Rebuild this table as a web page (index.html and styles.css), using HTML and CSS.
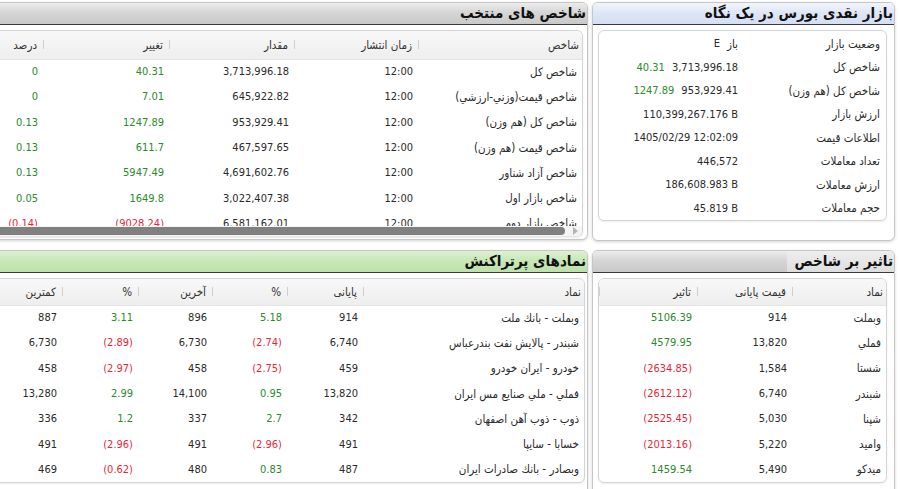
FILE: index.html
```html
<!DOCTYPE html>
<html lang="fa" dir="rtl">
<head>
<meta charset="utf-8">
<title>بازار</title>
<link rel="stylesheet" href="styles.css">
</head>
<body>
<div class="page">

  <section class="panel market">
    <h2 class="head blue"><span class="title">بازار نقدی بورس در یک نگاه</span></h2>
    <div class="box kv">
      <div class="kv-row"><span class="k">وضعیت بازار</span><span class="v"><span class="ar">باز</span><span class="ltr">E</span></span></div>
      <div class="kv-row"><span class="k">شاخص کل</span><span class="v"><span class="ltr">3,713,996.18</span><span class="ltr up">40.31</span></span></div>
      <div class="kv-row"><span class="k">شاخص کل (هم وزن)</span><span class="v"><span class="ltr">953,929.41</span><span class="ltr up">1247.89</span></span></div>
      <div class="kv-row"><span class="k">ارزش بازار</span><span class="v"><span class="ltr">110,399,267.176 B</span></span></div>
      <div class="kv-row"><span class="k">اطلاعات قیمت</span><span class="v"><span class="ltr">1405/02/29 12:02:09</span></span></div>
      <div class="kv-row"><span class="k">تعداد معاملات</span><span class="v"><span class="ltr">446,572</span></span></div>
      <div class="kv-row"><span class="k">ارزش معاملات</span><span class="v"><span class="ltr">186,608.983 B</span></span></div>
      <div class="kv-row"><span class="k">حجم معاملات</span><span class="v"><span class="ltr">45.819 B</span></span></div>
    </div>
  </section>

  <section class="panel selected">
    <h2 class="head gray"><span class="title">شاخص های منتخب</span></h2>
    <div class="box">
      <div class="clip">
        <table class="tbl">
          <colgroup><col class="c163"><col class="c124"><col class="c125"><col class="c126"><col></colgroup>
          <thead><tr><th class="first">شاخص</th><th>زمان انتشار</th><th>مقدار</th><th>تغییر</th><th>درصد</th></tr></thead>
          <tbody>
            <tr><td class="first">شاخص کل</td><td class="n">12:00</td><td class="n">3,713,996.18</td><td class="n up">40.31</td><td class="n up">0</td></tr>
            <tr><td class="first">شاخص قيمت(وزني-ارزشي)</td><td class="n">12:00</td><td class="n">645,922.82</td><td class="n up">7.01</td><td class="n up">0</td></tr>
            <tr><td class="first">شاخص کل (هم وزن)</td><td class="n">12:00</td><td class="n">953,929.41</td><td class="n up">1247.89</td><td class="n up">0.13</td></tr>
            <tr><td class="first">شاخص قیمت (هم وزن)</td><td class="n">12:00</td><td class="n">467,597.65</td><td class="n up">611.7</td><td class="n up">0.13</td></tr>
            <tr><td class="first">شاخص آزاد شناور</td><td class="n">12:00</td><td class="n">4,691,602.76</td><td class="n up">5947.49</td><td class="n up">0.13</td></tr>
            <tr><td class="first">شاخص بازار اول</td><td class="n">12:00</td><td class="n">3,022,407.38</td><td class="n up">1649.8</td><td class="n up">0.05</td></tr>
            <tr><td class="first">شاخص بازار دوم</td><td class="n">12:00</td><td class="n">6,581,162.01</td><td class="n down">(9028.24)</td><td class="n down">(0.14)</td></tr>
          </tbody>
        </table>
      </div>
      <div class="hscroll"><span class="arrow"></span><span class="thumb"></span></div>
    </div>
  </section>

  <section class="panel impact">
    <h2 class="head gray"><span class="title light">تاثیر بر شاخص</span></h2>
    <div class="box">
      <table class="tbl">
        <colgroup><col class="c93"><col class="c95"><col class="c98"><col></colgroup>
        <thead><tr><th class="first">نماد</th><th>قیمت پایانی</th><th>تاثیر</th><th></th></tr></thead>
        <tbody>
          <tr><td class="first">وبملت</td><td class="n">914</td><td class="n up">5106.39</td><td></td></tr>
          <tr><td class="first">فملي</td><td class="n">13,820</td><td class="n up">4579.95</td><td></td></tr>
          <tr><td class="first">شستا</td><td class="n">1,584</td><td class="n down">(2634.85)</td><td></td></tr>
          <tr><td class="first">شبندر</td><td class="n">6,740</td><td class="n down">(2612.12)</td><td></td></tr>
          <tr><td class="first">شپنا</td><td class="n">5,030</td><td class="n down">(2525.45)</td><td></td></tr>
          <tr><td class="first">واميد</td><td class="n">5,220</td><td class="n down">(2013.16)</td><td></td></tr>
          <tr><td class="first">ميدكو</td><td class="n">5,490</td><td class="n up">1459.54</td><td></td></tr>
        </tbody>
      </table>
    </div>
  </section>

  <section class="panel active">
    <h2 class="head green"><span class="title">نمادهای پرتراکنش</span></h2>
    <div class="box">
      <table class="tbl">
        <colgroup><col class="c220"><col class="c76"><col class="c75"><col class="c74"><col class="c76"><col></colgroup>
        <thead><tr><th class="first">نماد</th><th>پایانی</th><th>%</th><th>آخرین</th><th>%</th><th>کمترین</th></tr></thead>
        <tbody>
          <tr><td class="first">وبملت - بانك ملت</td><td class="n">914</td><td class="n up">5.18</td><td class="n">896</td><td class="n up">3.11</td><td class="n">887</td></tr>
          <tr><td class="first">شبندر - پالايش نفت بندرعباس</td><td class="n">6,740</td><td class="n down">(2.74)</td><td class="n">6,730</td><td class="n down">(2.89)</td><td class="n">6,730</td></tr>
          <tr><td class="first">خودرو - ايران خودرو</td><td class="n">459</td><td class="n down">(2.75)</td><td class="n">458</td><td class="n down">(2.97)</td><td class="n">458</td></tr>
          <tr><td class="first">فملي - ملي صنايع مس ايران</td><td class="n">13,820</td><td class="n up">0.95</td><td class="n">14,100</td><td class="n up">2.99</td><td class="n">13,280</td></tr>
          <tr><td class="first">ذوب - ذوب آهن اصفهان</td><td class="n">342</td><td class="n up">2.7</td><td class="n">337</td><td class="n up">1.2</td><td class="n">336</td></tr>
          <tr><td class="first">خسابا - سايپا</td><td class="n">491</td><td class="n down">(2.96)</td><td class="n">491</td><td class="n down">(2.96)</td><td class="n">491</td></tr>
          <tr><td class="first">وبصادر - بانك صادرات ايران</td><td class="n">487</td><td class="n up">0.83</td><td class="n">480</td><td class="n down">(0.62)</td><td class="n">469</td></tr>
        </tbody>
      </table>
    </div>
  </section>

</div>
</body>
</html>
```

FILE: styles.css
```css
* { box-sizing: border-box; }
html, body { margin: 0; padding: 0; }
body {
  width: 900px;
  height: 489px;
  overflow: hidden;
  background: #ffffff;
  direction: rtl;
  font-family: "DejaVu Sans Condensed", "DejaVu Sans", sans-serif;
  font-size: 11px;
  color: #2a2a2a;
}
.page {
  width: 900px;
  display: grid;
  grid-template-columns: 303px 610px;
  grid-template-rows: 239px 245px;
  column-gap: 4px;
  row-gap: 9px;
  padding: 2px 5px 0 0;
}
.panel {
  border: 1px solid #c6c6c6;
  border-radius: 6px;
  background: #ffffff;
  box-shadow: 0 1px 3px rgba(0, 0, 0, 0.18);
  overflow: hidden;
  display: flex;
  flex-direction: column;
}
.selected { align-self: start; padding-bottom: 2px; }

.head {
  margin: 0;
  height: 22px;
  flex: none;
  display: flex;
  align-items: stretch;
  border-bottom: 1px solid #3a3a3a;
  font-size: 15px;
  font-weight: bold;
  color: #111;
}
.head .title { display: flex; align-items: center; padding: 0 1px 1px 8px; }
.head.gray { background: linear-gradient(#ececec 0%, #d6d6d6 45%, #c9c9c9 100%); }
.head.blue { background: linear-gradient(#f1f5fc 0%, #dfe7f6 45%, #d3dff2 100%); }
.head.green { background: linear-gradient(#dcf1d1 0%, #c8e8b8 45%, #bde2aa 100%); }
.head .title.light { background: linear-gradient(#eeeeee, #dedede); }

.box {
  margin: 5px 5px 0 6px;
  border: 1px solid #d4d4d4;
  border-radius: 6px;
  background: #fff;
  overflow: hidden;
  box-shadow: 0 1px 2px rgba(0, 0, 0, 0.08);
}
.selected .box { margin-right: 4px; border-bottom-color: #e6e6e6; }
.market .box { margin: 5px 7px 0 5px; padding-top: 1px; }
.impact .box, .active .box { margin-top: 5px; }
.active .box { margin-right: 2px; }
.impact .box { margin: 5px 7px 0 5px; }

/* key/value box */
.kv-row {
  display: grid;
  grid-template-columns: 142px 1fr;
  height: 23.5px;
  align-items: center;
}
.kv-row .k { padding-right: 6px; font-size: 11.5px; }
.kv-row .v { padding-right: 6px; display: flex; gap: 7px; align-items: center; }
.ar { font-size: 11.5px; }
.ltr { direction: ltr; unicode-bidi: isolate; }

/* tables */
.tbl {
  width: 100%;
  border-collapse: collapse;
  table-layout: fixed;
}
.c163 { width: 163px; }
.c124 { width: 124px; }
.c125 { width: 125px; }
.c126 { width: 126px; }
.c93 { width: 93px; }
.c95 { width: 95px; }
.c98 { width: 98px; }
.c220 { width: 220px; }
.c76 { width: 76px; }
.c75 { width: 75px; }
.c74 { width: 74px; }

.tbl th {
  height: 28px;
  padding: 0 7px 0 2px;
  text-align: right;
  font-weight: normal;
  font-size: 11.5px;
  color: #333;
  white-space: nowrap;
  background:
    linear-gradient(#cfcfcf, #cfcfcf) no-repeat right center / 1px 9px,
    linear-gradient(#f8f8f8, #eeeeee);
  border-bottom: 1px solid #e4e4e4;
}
.tbl th.first {
  padding-right: 3px;
  background: linear-gradient(#f8f8f8, #eeeeee);
}
.impact .tbl th, .active .tbl th { height: 26px; }
.tbl td {
  height: 25.3px;
  padding: 0 6px 0 2px;
  text-align: right;
  white-space: nowrap;
  overflow: hidden;
}
.tbl td.first { padding-right: 5px; font-size: 11.5px; }
.tbl td.n { direction: ltr; text-align: right; padding: 0 6px 0 2px; }

.up { color: #2b8a2b; }
.down { color: #e8283a; }

.clip { height: 195px; overflow: hidden; }

.hscroll {
  height: 10px;
  display: flex;
  align-items: center;
  background: #f4f4f4;
}
.hscroll .arrow {
  flex: none;
  width: 0;
  height: 0;
  margin: 0 4px 0 8px;
  border-top: 4px solid transparent;
  border-bottom: 4px solid transparent;
  border-left: 5px solid #b4b4b4;
}
.hscroll .thumb {
  flex: 1;
  height: 8px;
  background: #808080;
  border-radius: 4px;
}
```
